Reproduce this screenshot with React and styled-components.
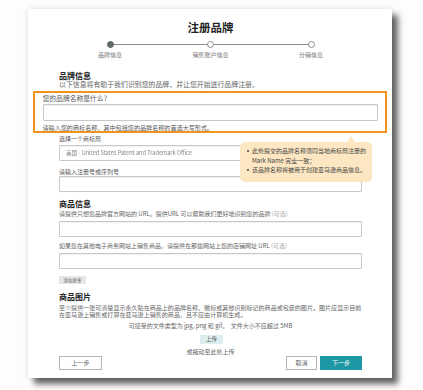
import React from "react";
import styled, { createGlobalStyle } from "styled-components";

const GlobalStyle = createGlobalStyle`
  html, body {
    margin: 0;
    padding: 0;
    background: #fdfdfd;
  }
  body {
    font-family: "Noto Sans CJK SC", "Noto Sans", "Liberation Sans", sans-serif;
    color: #333;
  }
  * {
    box-sizing: border-box;
  }
`;

const Page = styled.div`
  width: 423px;
  height: 390px;
  padding: 9px 0 0 28px;
  overflow: hidden;
`;

const Card = styled.div`
  width: 364px;
  height: 369px;
  background: #fff;
  padding: 12px 30px 0 31px;
  box-shadow: 6px 6px 6px rgba(0, 0, 0, 0.6), 0 0 6px rgba(0, 0, 0, 0.12);
  display: flex;
  flex-direction: column;
`;

const Title = styled.h1`
  margin: 0;
  text-align: center;
  font-size: 11.5px;
  line-height: 13px;
  font-weight: 700;
  color: #222;
`;

const Stepper = styled.div`
  position: relative;
  display: flex;
  justify-content: space-between;
  margin: 6.5px 0 0 21px;
  width: 261px;
`;

const StepLine = styled.div`
  position: absolute;
  left: 30px;
  right: 30px;
  top: 3.5px;
  height: 1px;
  background: #8a9090;
`;

const Step = styled.div`
  width: 60px;
  display: flex;
  flex-direction: column;
  align-items: center;
  z-index: 1;
`;

const Dot = styled.span`
  width: 7px;
  height: 7px;
  border-radius: 50%;
  background: ${(p) => (p.$active ? "#5f6868" : "#fff")};
  border: 1px solid ${(p) => (p.$active ? "#5f6868" : "#8a9090")};
`;

const StepLabel = styled.span`
  margin-top: 3px;
  font-size: 6px;
  line-height: 8px;
  color: #777;
  white-space: nowrap;
`;

const Heading = styled.h2`
  margin: ${(p) => p.$mt || 0}px 0 0 0;
  font-size: 8px;
  line-height: 9px;
  font-weight: 700;
  color: #222;
`;

const Text = styled.div`
  margin-top: ${(p) => p.$mt || 0}px;
  font-size: ${(p) => p.$size || 6}px;
  line-height: ${(p) => p.$lh || 8}px;
  color: ${(p) => p.$color || "#666"};
  white-space: nowrap;
  text-align: ${(p) => p.$align || "left"};
`;

const Optional = styled.span`
  color: #aaa;
`;

const Highlight = styled.div`
  margin: 3px -25px 0 -26px;
  border: 2.5px solid #f0941f;
  padding: 1px 7.5px 0;
  background: #fff;
`;

const Input = styled.div`
  margin-top: ${(p) => p.$mt || 0}px;
  height: ${(p) => p.$h || 16}px;
  border: 1px solid #c9c9c9;
  border-radius: 1px;
  box-shadow: inset 0 1px 1px rgba(0, 0, 0, 0.06);
  background: #fff;
  display: flex;
  align-items: center;
  padding-left: 6px;
  overflow: hidden;
`;

const Blurred = styled.span`
  font-size: 5.6px;
  color: #888;
  filter: blur(0.6px);
  white-space: nowrap;
`;

const Trademark = styled.div`
  position: relative;
  margin-top: 1px;
`;

const Tooltip = styled.div`
  position: absolute;
  left: 181px;
  top: 8.5px;
  width: 132px;
  height: 40px;
  background: #fce7c2;
  border-radius: 5px;
  padding: 4px 6px 0 6px;
  z-index: 2;

  &::before {
    content: "";
    position: absolute;
    top: -6px;
    right: 17px;
    border-left: 4px solid transparent;
    border-right: 4px solid transparent;
    border-bottom: 6px solid #fce7c2;
  }
`;

const TipList = styled.ul`
  margin: 0;
  padding: 0 0 0 6px;
  list-style: none;
`;

const TipItem = styled.li`
  position: relative;
  font-size: 6px;
  line-height: 9.5px;
  color: #444;

  &::before {
    content: "";
    position: absolute;
    left: -5px;
    top: 4px;
    width: 2px;
    height: 2px;
    border-radius: 50%;
    background: #444;
  }
`;

const SmallButton = styled.button`
  align-self: flex-start;
  margin-top: 7px;
  height: 8px;
  width: 27px;
  padding: 0;
  border: none;
  background: #e6e6e6;
  font-family: inherit;
  font-size: 4.5px;
  line-height: 8px;
  color: #666;
`;

const UploadButton = styled.button`
  align-self: center;
  margin: 5px 0 0 2px;
  width: 23px;
  height: 9px;
  padding: 0;
  border: none;
  background: #dcefef;
  font-family: inherit;
  font-size: 5.5px;
  line-height: 9px;
  color: #555;
`;

const Footer = styled.div`
  display: flex;
  align-items: center;
  gap: 3px;
`;

const Spacer = styled.div`
  flex: 1;
`;

const FootButton = styled.button`
  width: ${(p) => p.$w}px;
  height: 14px;
  padding: 0;
  font-family: inherit;
  font-size: 6px;
  line-height: 12px;
  border: 1px solid ${(p) => (p.$primary ? "#1e98a4" : "#b5b5b5")};
  background: ${(p) => (p.$primary ? "#1e98a4" : "#fff")};
  color: ${(p) => (p.$primary ? "#fff" : "#666")};
`;

const steps = [
  { label: "品牌信息", active: true },
  { label: "销售账户信息" },
  { label: "分销信息" },
];

export default function App() {
  return (
    <>
      <GlobalStyle />
      <Page>
        <Card>
          <Title>注册品牌</Title>
          <Stepper>
            <StepLine />
            {steps.map((s) => (
              <Step key={s.label}>
                <Dot $active={s.active} />
                <StepLabel>{s.label}</StepLabel>
              </Step>
            ))}
          </Stepper>

          <Heading $mt={12}>品牌信息</Heading>
          <Text $size={6.9} $mt={0.5}>以下信息将有助于我们识别您的品牌，并让您开始进行品牌注册。</Text>

          <Highlight>
            <Text $size={6.8} $lh={9} $color="#555">您的品牌名称是什么?</Text>
            <Input $mt={0.5} $h={17} />
            <Text $mt={3} $size={6.1} $lh={7} $color="#555">
              请输入您的商标名称，其中包括您的品牌名称的首选大写形式。
            </Text>
          </Highlight>

          <Trademark>
            <Text $lh={9} $color="#555">选择一个商标局</Text>
            <Input $mt={2.5}>
              <Blurred>美国 - United States Patent and Trademark Office</Blurred>
            </Input>
            <Text $mt={5.5} $lh={9} $color="#555">请输入注册号或序列号</Text>
            <Input $mt={0.5} />
            <Tooltip>
              <TipList>
                <TipItem>此处提交的品牌名称须同当地商标局注册的 Mark Name 完全一致；</TipItem>
                <TipItem>该品牌名称将被用于创建亚马逊商品信息。</TipItem>
              </TipList>
            </Tooltip>
          </Trademark>

          <Heading $mt={6.5}>商品信息</Heading>
          <Text $mt={2.5}>
            请提供只想您品牌官方网站的 URL。提供URL 可以帮助我们更好地识别您的品牌 <Optional>(可选)</Optional>
          </Text>
          <Input $mt={3} />
          <Text $mt={3.5} $lh={9}>
            如果您在其他电子商务网站上销售商品，请提供在那些网站上您的店铺网址 URL <Optional>(可选)</Optional>
          </Text>
          <Input $mt={3.5} />
          <SmallButton>添加更多</SmallButton>

          <Heading $mt={7.5}>商品图片</Heading>
          <Text $mt={3} $size={6.05} $lh={7}>
            至少提供一张可清楚显示永久贴在商品上的品牌名称、徽标或其他识别标记的商品或包装的图片。图片应显示目前
          </Text>
          <Text $size={6.05} $lh={7}>
            在亚马逊上销售或打算在亚马逊上销售的商品，且不应由计算机生成。
          </Text>
          <Text $mt={4.5} $align="center">
            可接受的文件类型为 jpg, png 和 gif。&nbsp;&nbsp;文件大小不应超过 5MB
          </Text>
          <UploadButton>上传</UploadButton>
          <Text $mt={4} $align="center">或拖动至此处上传</Text>

          <Footer>
            <FootButton $w={43}>上一步</FootButton>
            <Spacer />
            <FootButton $w={31}>取消</FootButton>
            <FootButton $w={42} $primary>下一步</FootButton>
          </Footer>
        </Card>
      </Page>
    </>
  );
}
